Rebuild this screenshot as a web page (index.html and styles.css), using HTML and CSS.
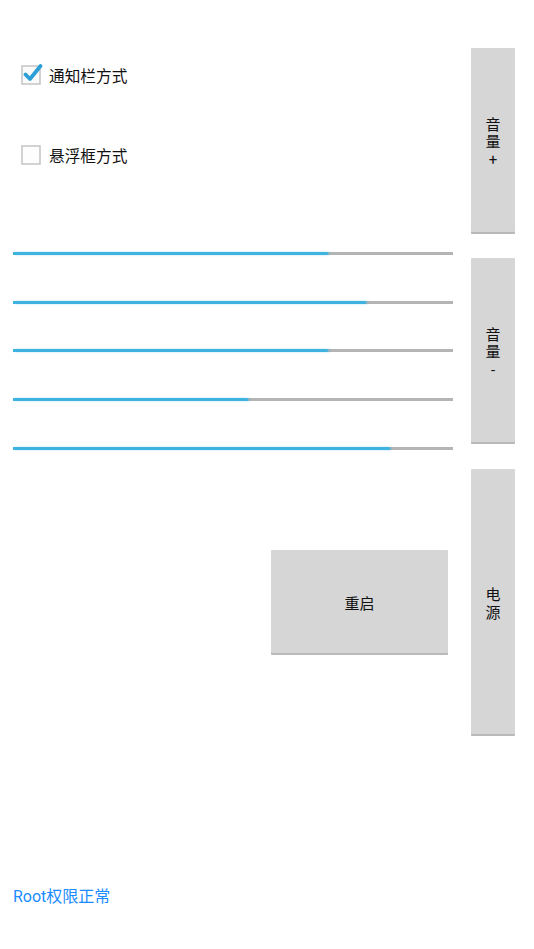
FILE: index.html
```html
<!DOCTYPE html>
<html lang="zh-CN">
<head>
<meta charset="utf-8">
<title>控制</title>
<link rel="stylesheet" href="styles.css">
</head>
<body>
<div class="screen">
  <div class="main">
    <div class="left">
      <label class="check-row first">
        <span class="box checked">
          <svg width="22" height="22" viewBox="0 0 22 22">
            <rect x="1" y="3" width="18" height="18" fill="#fafafa" stroke="#c4c4c4" stroke-width="1.5"/>
            <path d="M4.5 11.5 L9 16 L19.5 3" fill="none" stroke="#2c9fd6" stroke-width="3.8" stroke-linecap="round" stroke-linejoin="round"/>
          </svg>
        </span>
        <span class="label">通知栏方式</span>
      </label>
      <label class="check-row second">
        <span class="box">
          <svg width="22" height="22" viewBox="0 0 22 22">
            <rect x="1" y="3" width="18" height="18" fill="#fdfdfd" stroke="#c4c4c4" stroke-width="1.5"/>
          </svg>
        </span>
        <span class="label">悬浮框方式</span>
      </label>

      <div class="sliders">
        <div class="slider"><div class="track"><div class="fill" style="width:71.6%"></div></div></div>
        <div class="slider"><div class="track"><div class="fill" style="width:80.2%"></div></div></div>
        <div class="slider"><div class="track"><div class="fill" style="width:71.6%"></div></div></div>
        <div class="slider"><div class="track"><div class="fill" style="width:53.4%"></div></div></div>
        <div class="slider"><div class="track"><div class="fill" style="width:85.7%"></div></div></div>
      </div>

      <div class="reboot-wrap">
        <button class="btn reboot">重启</button>
      </div>
    </div>
    <div class="right">
      <button class="btn side vol-up">音<br>量<br>+</button>
      <button class="btn side vol-down">音<br>量<br>-</button>
      <button class="btn side power">电<br>源</button>
    </div>
  </div>
  <div class="footer">Root权限正常</div>
</div>
</body>
</html>
```

FILE: styles.css
```css
html, body {
  margin: 0;
  padding: 0;
  background: #ffffff;
}

body {
  font-family: "Roboto", "Noto Sans CJK SC", sans-serif;
  color: #111111;
}

.screen {
  display: flex;
  flex-direction: column;
  min-height: 949px;
  box-sizing: border-box;
}

.main {
  display: flex;
  flex-direction: row;
  padding: 48px 19px 0 13px;
}

.left {
  width: 440px;
  display: flex;
  flex-direction: column;
}

.check-row {
  display: flex;
  align-items: center;
  height: 32px;
  padding-left: 8px;
}

.check-row.first {
  margin-top: 12px;
}

.check-row.second {
  margin-top: 48px;
}

.box {
  width: 22px;
  height: 22px;
  display: block;
  margin-top: -5px;
}

.box svg {
  display: block;
}

.label {
  margin-left: 6px;
  margin-top: 2px;
  font-size: 15.7px;
  line-height: 20px;
  color: #111111;
}

.sliders {
  margin-top: 57px;
  display: flex;
  flex-direction: column;
}

.slider {
  height: 48.75px;
  display: flex;
  align-items: center;
}

.track {
  width: 100%;
  height: 3px;
  background: #b4b4b4;
  position: relative;
}

.fill {
  height: 3px;
  background: #3fb3e0;
  border-radius: 0 2px 2px 0;
  box-shadow: 2px 0 2px rgba(51, 181, 229, 0.45);
}

.reboot-wrap {
  display: flex;
  margin-top: 77px;
  padding-left: 258px;
}

.btn {
  font-family: "Roboto", "Noto Sans CJK SC", sans-serif;
  font-size: 15px;
  color: #111111;
  background: #d6d6d6;
  border: none;
  border-radius: 1px;
  box-shadow: 0 2px 0 #b9b9b9;
  padding: 6px 0 0 0;
  margin: 0;
  cursor: pointer;
}

.reboot {
  width: 177px;
  height: 103px;
  line-height: 20px;
}

.right {
  margin-left: 18px;
  width: 44px;
  display: flex;
  flex-direction: column;
}

.side {
  width: 44px;
  line-height: 17.5px;
}

.vol-up {
  height: 184px;
}

.vol-down {
  height: 184px;
  margin-top: 26px;
}

.power {
  height: 265px;
  margin-top: 27px;
}

.footer {
  margin-top: auto;
  padding: 0 0 42px 13px;
  font-size: 16px;
  line-height: 20px;
  color: #1a8cff;
}
```
